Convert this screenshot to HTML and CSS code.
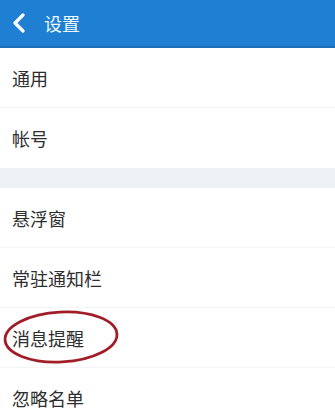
FILE: index.html
```html
<!DOCTYPE html>
<html>
<head>
<meta charset="utf-8">
<link rel="stylesheet" href="styles.css">
</head>
<body>
<div class="header">
  <svg class="back" width="14" height="20" viewBox="0 0 14 20"><path d="M11 2 L3 10 L11 18" fill="none" stroke="#ffffff" stroke-width="3.2" stroke-linecap="round" stroke-linejoin="round"/></svg>
  <span class="title">设置</span>
</div>
<div class="list">
  <div class="row">通用</div>
  <div class="row last">帐号</div>
</div>
<div class="gap"></div>
<div class="list">
  <div class="row">悬浮窗</div>
  <div class="row">常驻通知栏</div>
  <div class="row marked">消息提醒
    <svg class="circle" width="120" height="56" viewBox="0 0 120 56"><ellipse cx="60" cy="28" rx="56" ry="25" fill="none" stroke="#a11e28" stroke-width="2.8" transform="rotate(-3 60 28)"/></svg>
  </div>
  <div class="row">忽略名单</div>
</div>
</body>
</html>
```
FILE: styles.css
```css
html, body {
  margin: 0;
  padding: 0;
  background: #ffffff;
  font-family: "Noto Sans CJK SC", "Noto Sans", sans-serif;
  overflow: hidden;
}
.header {
  height: 46px;
  background: #1f80d3;
  border-bottom: 2px solid #1a6fb8;
  display: flex;
  align-items: center;
  padding-left: 12px;
  gap: 18px;
}
.back {
  display: block;
}
.title {
  color: #eefaff;
  font-size: 18px;
  line-height: 1;
}
.list {
  background: #ffffff;
}
.row {
  height: 59px;
  border-bottom: 1px solid #f4f4f6;
  display: flex;
  align-items: center;
  padding-left: 12px;
  font-size: 18px;
  color: #2e2e2e;
  position: relative;
}
.row.last {
  border-bottom: none;
  height: 60px;
}
.gap {
  height: 20px;
  background: #edf1f5;
}
.circle {
  position: absolute;
  left: 1px;
  top: 1px;
}
```
